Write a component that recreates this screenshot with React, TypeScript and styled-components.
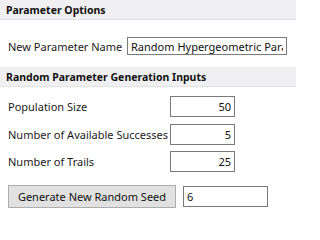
import { Fragment } from "react";
import styled, { createGlobalStyle } from "styled-components";

const GlobalStyle = createGlobalStyle`
  body {
    margin: 0;
    background: #ffffff;
    font-family: "Noto Sans", "Liberation Sans", sans-serif;
    font-size: 11px;
    color: #1a1a1a;
  }
`;

const Panel = styled.div`
  width: 296px;
  height: 221px;
  display: flex;
  flex-direction: column;
  overflow: hidden;
`;

const SectionHeader = styled.div<{ $top?: number }>`
  height: 19px;
  margin-top: ${(p) => p.$top ?? 0}px;
  padding-left: 6px;
  display: flex;
  align-items: center;
  background: #f0f0f2;
  border-bottom: 1px solid #e3e3e6;
  font-weight: bold;
  font-size: 10.5px;
  color: #111;
`;

const NameRow = styled.div`
  margin-top: 17px;
  padding-left: 8px;
  display: grid;
  grid-template-columns: 119px 160px;
  align-items: center;
`;

const Label = styled.span`
  white-space: nowrap;
`;

const TextBox = styled.input<{ $align?: "left" | "right"; $height?: number }>`
  box-sizing: border-box;
  height: ${(p) => p.$height ?? 21}px;
  width: 100%;
  margin: 0;
  padding: 0 3px;
  border: 1px solid #7a7a7a;
  border-radius: 0;
  background: #fff;
  font-family: inherit;
  font-size: 11px;
  color: #111;
  text-align: ${(p) => p.$align ?? "left"};
  outline: none;
  overflow: hidden;
`;

const InputGrid = styled.div`
  margin-top: 9px;
  padding-left: 8px;
  display: grid;
  grid-template-columns: 162px 65px;
  grid-auto-rows: 21px;
  row-gap: 6.5px;
  align-items: center;
`;

const SeedRow = styled.div`
  margin-top: 13px;
  padding-left: 8px;
  display: flex;
  align-items: center;
  gap: 7px;
`;

const Button = styled.button`
  box-sizing: border-box;
  width: 168px;
  height: 23px;
  margin: 0;
  padding: 0;
  border: 1px solid #adadad;
  background: #e1e1e1;
  font-family: inherit;
  font-size: 11px;
  color: #111;
`;

const SeedBox = styled.div`
  width: 85px;
`;

const inputs = [
  { label: "Population Size", value: "50" },
  { label: "Number of Available Successes", value: "5" },
  { label: "Number of Trails", value: "25" },
];

export default function App() {
  return (
    <>
      <GlobalStyle />
      <Panel>
        <SectionHeader>Parameter Options</SectionHeader>
        <NameRow>
          <Label>New Parameter Name</Label>
          <TextBox
            $height={18}
            readOnly
            value="Random Hypergeometric Parameter"
          />
        </NameRow>
        <SectionHeader $top={12}>Random Parameter Generation Inputs</SectionHeader>
        <InputGrid>
          {inputs.map((item) => (
            <Fragment key={item.label}>
              <Label>{item.label}</Label>
              <TextBox $align="right" readOnly value={item.value} />
            </Fragment>
          ))}
        </InputGrid>
        <SeedRow>
          <Button>Generate New Random Seed</Button>
          <SeedBox>
            <TextBox readOnly value="6" />
          </SeedBox>
        </SeedRow>
      </Panel>
    </>
  );
}
